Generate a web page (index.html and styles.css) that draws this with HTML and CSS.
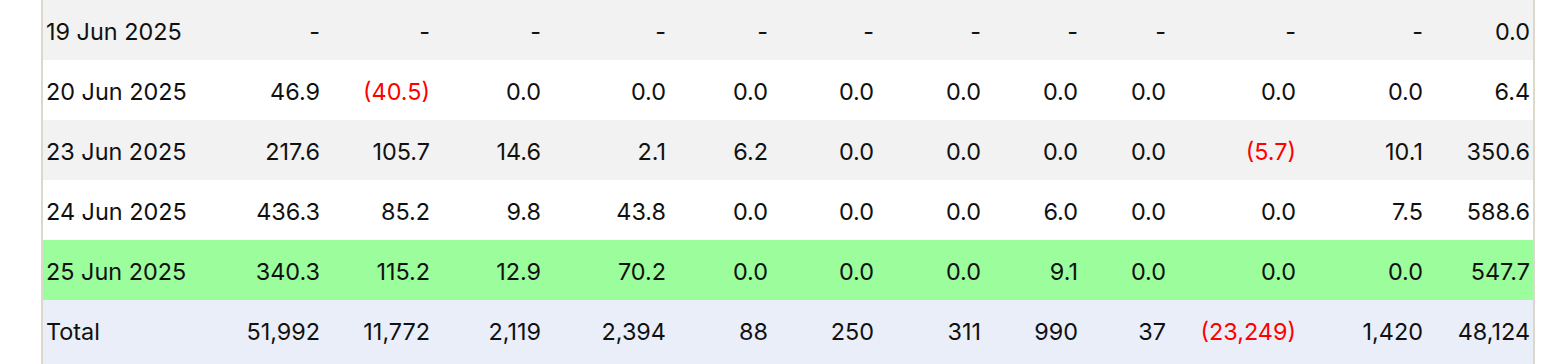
FILE: index.html
```html
<!DOCTYPE html>
<html>
<head>
<meta charset="utf-8">
<link rel="stylesheet" href="styles.css">
</head>
<body>
<div class="frame">
<table class="grid">
<colgroup>
<col class="c-date"><col class="c2"><col class="c3"><col class="c4"><col class="c5"><col class="c6"><col class="c7"><col class="c8"><col class="c9"><col class="c10"><col class="c11"><col class="c12"><col class="c13">
</colgroup>
<tbody>
<tr class="alt"><td>19 Jun 2025</td><td>-</td><td>-</td><td>-</td><td>-</td><td>-</td><td>-</td><td>-</td><td>-</td><td>-</td><td>-</td><td>-</td><td>0.0</td></tr>
<tr><td>20 Jun 2025</td><td>46.9</td><td class="neg">(40.5)</td><td>0.0</td><td>0.0</td><td>0.0</td><td>0.0</td><td>0.0</td><td>0.0</td><td>0.0</td><td>0.0</td><td>0.0</td><td>6.4</td></tr>
<tr class="alt"><td>23 Jun 2025</td><td>217.6</td><td>105.7</td><td>14.6</td><td>2.1</td><td>6.2</td><td>0.0</td><td>0.0</td><td>0.0</td><td>0.0</td><td class="neg">(5.7)</td><td>10.1</td><td>350.6</td></tr>
<tr><td>24 Jun 2025</td><td>436.3</td><td>85.2</td><td>9.8</td><td>43.8</td><td>0.0</td><td>0.0</td><td>0.0</td><td>6.0</td><td>0.0</td><td>0.0</td><td>7.5</td><td>588.6</td></tr>
<tr class="today"><td>25 Jun 2025</td><td>340.3</td><td>115.2</td><td>12.9</td><td>70.2</td><td>0.0</td><td>0.0</td><td>0.0</td><td>9.1</td><td>0.0</td><td>0.0</td><td>0.0</td><td>547.7</td></tr>
<tr class="total"><td>Total</td><td>51,992</td><td>11,772</td><td>2,119</td><td>2,394</td><td>88</td><td>250</td><td>311</td><td>990</td><td>37</td><td class="neg">(23,249)</td><td>1,420</td><td>48,124</td></tr>
</tbody>
</table>
</div>
</body>
</html>
```
FILE: styles.css
```css
html, body {
  margin: 0;
  padding: 0;
  background: #ffffff;
}
.frame {
  margin-left: 41px;
  width: 1490px;
  height: 364px;
  border-left: 2px solid #ddd8cd;
  border-right: 2px solid #ddd8cd;
  overflow: hidden;
}
.grid {
  width: 1490px;
  table-layout: fixed;
  border-collapse: collapse;
  font-family: Inter, "Liberation Sans", sans-serif;
  font-size: 23.4px;
  color: #111;
}
.grid td {
  height: 58px;
  padding: 2px 3px 0;
  text-align: right;
  vertical-align: middle;
  white-space: nowrap;
}
.grid td:first-child {
  text-align: left;
}
.c-date { width: 170px; }
.c2 { width: 110px; }
.c3 { width: 110px; }
.c4 { width: 111px; }
.c5 { width: 125px; }
.c6 { width: 102px; }
.c7 { width: 106px; }
.c8 { width: 107px; }
.c9 { width: 97px; }
.c10 { width: 88px; }
.c11 { width: 130px; }
.c12 { width: 127px; }
.c13 { width: 107px; }
.alt td { background: #f2f2f2; }
.today td { background: #9bfd9b; }
.total td {
  background: #eaeef9;
  padding-bottom: 10px;
}
.neg { color: #ff0000; }
```
